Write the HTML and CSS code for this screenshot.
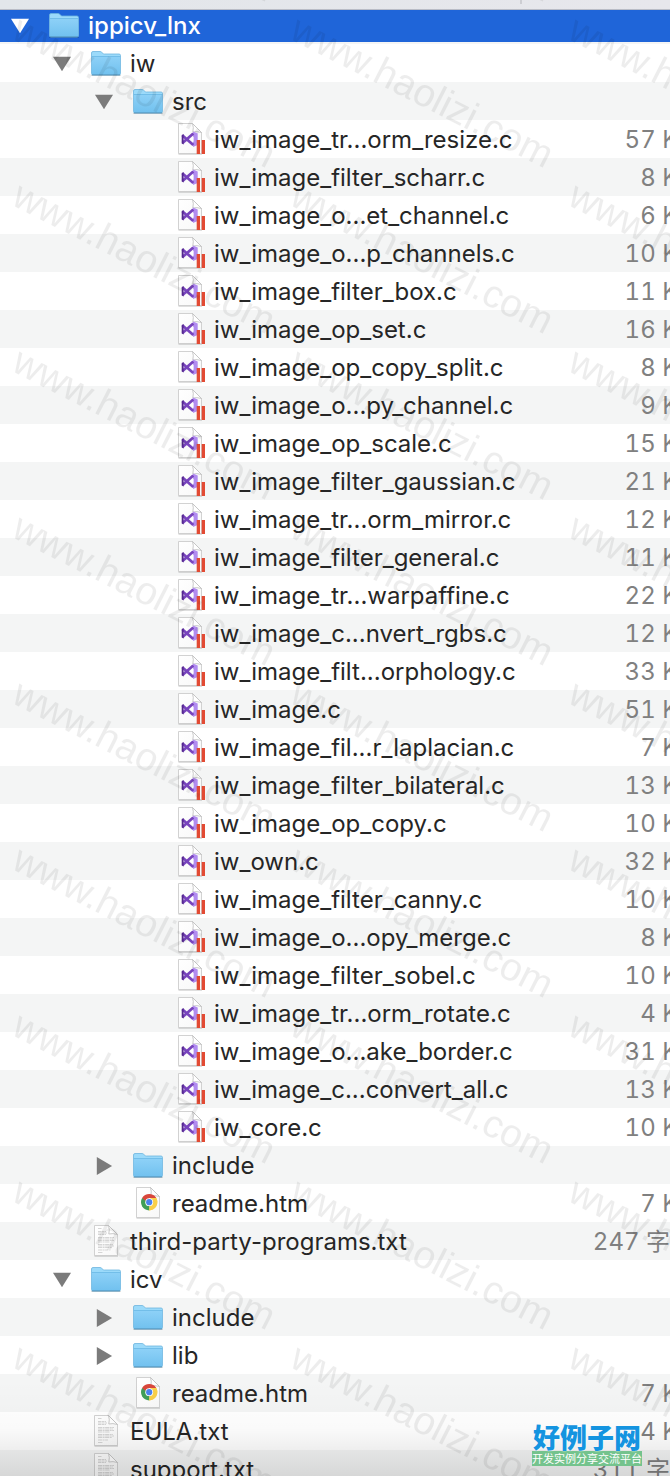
FILE: index.html
```html
<!DOCTYPE html>
<html lang="zh-CN">
<head>
    <meta charset="UTF-8">
    <meta name="viewport" content="width=device-width, initial-scale=1.0">
    <title>ippicv_lnx</title>
    <link rel="stylesheet" href="styles.css">
</head>
<body>
    <!-- Icons -->
    <svg class="sprite" aria-hidden="true">
        <defs>
            <linearGradient id="folderFill" x1="0" y1="0" x2="0" y2="1">
                <stop offset="0" stop-color="#8ed1f7"/>
                <stop offset="1" stop-color="#71c1ef"/>
            </linearGradient>
            <linearGradient id="pageFill" x1="0" y1="0" x2="1" y2="1">
                <stop offset="0" stop-color="#ffffff"/>
                <stop offset="1" stop-color="#f8f8f8"/>
            </linearGradient>
        </defs>
        <symbol id="folder" viewBox="0 0 30 38">
            <path d="M.5 31.500h29" stroke="#000" stroke-opacity=".25"/>
            <path d="M.5 9q0-1.500 1.500-1.500h7q1 0 1.700.8l1.300 1.200q.6.500 1.500.5h14.500q1.500 0 1.500 1.500v18q0 1.500-1.500 1.500H2q-1.500 0-1.500-1.500z" fill="#9bdafa" stroke="#6db5de" stroke-width=".8"/>
            <path d="M.9 12.500h28.200v17q0 1-1.100 1H2q-1.100 0-1.100-1z" fill="url(#folderFill)"/>
            <path d="M.9 12.500h28.200" stroke="#69b7e4" stroke-width=".8"/>
            <path d="M1 30.700h28" stroke="#5a9fc9"/>
        </symbol>
        <symbol id="page" viewBox="0 0 30 38">
            <path d="M3.500 34h23.500" stroke="#000" stroke-opacity=".25"/>
            <path d="M3.500 3.500h14l9 9v21h-23z" fill="url(#pageFill)" stroke="#c6c6c6" stroke-width=".8"/>
            <path d="M17.500 3.500q1.500 4 .3 8.500 4-1 8.700.5z" fill="#fff" stroke="#bdbdbd" stroke-width=".8"/>
        </symbol>
        <symbol id="source" viewBox="0 0 30 38">
            <use href="#page"/>
            <path d="M18 11.500l4.700 2v11.500l-4.700 2z" fill="#b18cf0"/>
            <path d="M7.500 15.500L18.300 25M7.500 23L18.300 13.500" stroke="#7844bd" stroke-width="2.800"/>
            <path d="M6.700 15l1.900-1v10.500l-1.900-1z" fill="#54278f"/>
            <path d="M18.600 16.500v5.500l-3.200-2.700z" fill="#fff"/>
            <rect x="21.700" y="20" width="3.300" height="14" fill="#e24a33"/>
            <rect x="26.700" y="20" width="3.300" height="14" fill="#e24a33"/>
        </symbol>
        <symbol id="chrome" viewBox="0 0 30 38">
            <use href="#page"/>
            <path d="M16.200 18.200L23.300 14.100A8.200 8.200 0 0 1 16.200 26.400z" fill="#f9cf48"/>
            <path d="M16.200 18.200V26.400A8.200 8.200 0 0 1 9.100 14.100z" fill="#3f9e58"/>
            <path d="M16.200 14.100h7.100a8.200 8.200 0 0 1-3.500 11.400l-3.600.9 3.500-6.200z" fill="#f9cf48"/>
            <path d="M9.100 14.100l3.600 6.200 3.500-6.200z" fill="#3f9e58"/>
            <path d="M9.100 14.100A8.200 8.200 0 0 1 23.300 14.100h-7.100l-4 2.600z" fill="#d8463b"/>
            <circle cx="16.200" cy="18.200" r="3.900" fill="#fff"/>
            <circle cx="16.200" cy="18.200" r="3.100" fill="#4a82ee"/>
        </symbol>
        <symbol id="text" viewBox="0 0 30 38">
            <use href="#page"/>
            <g fill="none" stroke="#c4c4c4" stroke-width=".7">
                <path d="M7 6.500h4M7 9.500h8M7 11h9M7 12.500h8" stroke-dasharray="3 .5"/>
                <path d="M7 15.500h16M7 17h15M7 18.500h16M7 20h12M7 22.500h15M7 24h16M7 25.500h14M7 28h10M7 30.500h5" stroke-dasharray="4 .6 2 .5"/>
            </g>
        </symbol>
    </svg>

    <div class="finder">
        <div class="column-header">
            <div class="column-name"></div>
            <div class="column-size"></div>
        </div>
        <table class="files">
            <colgroup>
                <col>
                <col class="size-col">
            </colgroup>
            <tbody id="fileRows"></tbody>
        </table>
    </div>

    <div class="shade"></div>
    <svg class="watermark" aria-hidden="true">
        <defs>
            <pattern id="mark" x="0" y="10" width="278" height="166" patternUnits="userSpaceOnUse">
                <text class="mark-text" transform="translate(10 28) rotate(27)">www.haolizi.com</text>
            </pattern>
        </defs>
        <rect width="100%" height="100%" fill="url(#mark)"/>
    </svg>
    <div class="site-logo">
        <div class="site-name">好例子网</div>
        <div class="site-slogan">开发实例分享交流平台</div>
    </div>

    <script>
        // [depth, icon, name, size, state]
        const files = [
            [0, 'folder', 'ippicv_lnx', '', 'open'],
            [1, 'folder', 'iw', '', 'open'],
            [2, 'folder', 'src', '', 'open'],
            [3, 'source', 'iw_image_tr...orm_resize.c', '57 KB'],
            [3, 'source', 'iw_image_filter_scharr.c', '8 KB'],
            [3, 'source', 'iw_image_o...et_channel.c', '6 KB'],
            [3, 'source', 'iw_image_o...p_channels.c', '10 KB'],
            [3, 'source', 'iw_image_filter_box.c', '11 KB'],
            [3, 'source', 'iw_image_op_set.c', '16 KB'],
            [3, 'source', 'iw_image_op_copy_split.c', '8 KB'],
            [3, 'source', 'iw_image_o...py_channel.c', '9 KB'],
            [3, 'source', 'iw_image_op_scale.c', '15 KB'],
            [3, 'source', 'iw_image_filter_gaussian.c', '21 KB'],
            [3, 'source', 'iw_image_tr...orm_mirror.c', '12 KB'],
            [3, 'source', 'iw_image_filter_general.c', '11 KB'],
            [3, 'source', 'iw_image_tr...warpaffine.c', '22 KB'],
            [3, 'source', 'iw_image_c...nvert_rgbs.c', '12 KB'],
            [3, 'source', 'iw_image_filt...orphology.c', '33 KB'],
            [3, 'source', 'iw_image.c', '51 KB'],
            [3, 'source', 'iw_image_fil...r_laplacian.c', '7 KB'],
            [3, 'source', 'iw_image_filter_bilateral.c', '13 KB'],
            [3, 'source', 'iw_image_op_copy.c', '10 KB'],
            [3, 'source', 'iw_own.c', '32 KB'],
            [3, 'source', 'iw_image_filter_canny.c', '10 KB'],
            [3, 'source', 'iw_image_o...opy_merge.c', '8 KB'],
            [3, 'source', 'iw_image_filter_sobel.c', '10 KB'],
            [3, 'source', 'iw_image_tr...orm_rotate.c', '4 KB'],
            [3, 'source', 'iw_image_o...ake_border.c', '31 KB'],
            [3, 'source', 'iw_image_c...convert_all.c', '13 KB'],
            [3, 'source', 'iw_core.c', '10 KB'],
            [2, 'folder', 'include', '', 'closed'],
            [2, 'chrome', 'readme.htm', '7 KB'],
            [1, 'text', 'third-party-programs.txt', '247 字节'],
            [1, 'folder', 'icv', '', 'open'],
            [2, 'folder', 'include', '', 'closed'],
            [2, 'folder', 'lib', '', 'closed'],
            [2, 'chrome', 'readme.htm', '7 KB'],
            [1, 'text', 'EULA.txt', '4 KB'],
            [1, 'text', 'support.txt', '311 字节']
        ];

        let rows = '';
        files.forEach(([depth, icon, name, size, state], i) => {
            const toggle = state
                ? `<button class="toggle ${state}" aria-label="${name}" aria-expanded="${state === 'open'}"></button>`
                : '<span class="toggle"></span>';
            rows += `<tr class="${i === 0 ? 'selected' : ''}">
                <td><div class="name depth-${depth}">${toggle}<svg class="icon" aria-hidden="true"><use href="#${icon}"/></svg><span>${name}</span></div></td>
                <td class="size">${size}</td>
            </tr>`;
        });
        document.getElementById('fileRows').innerHTML = rows;
    </script>
</body>
</html>
```
FILE: styles.css
```css
body {
    margin: 0;
    height: 100vh;
    position: relative;
    overflow: hidden;
    background-color: #fff;
    color: #262626;
    font-family: Inter, "Noto Sans CJK SC", sans-serif;
    font-size: 24px;
}

.sprite {
    position: absolute;
    width: 0;
    height: 0;
}

.finder {
    overflow: hidden;
}

.column-header {
    display: flex;
    height: 10px;
    box-sizing: border-box;
    background: linear-gradient(90deg, #e2e6ea, #e7e7ec);
    border-bottom: 1px solid #b9bcc6;
}

.column-name {
    flex: 1;
    height: 4px;
    border-right: 2px solid #cdced3;
}

.column-size {
    width: 148px;
}

.files {
    width: calc(100% + 24px);
    table-layout: fixed;
    border-collapse: collapse;
}

.size-col {
    width: 172px;
}

.files td {
    height: 36px;
    padding: 2px 0 0;
    line-height: 36px;
    white-space: nowrap;
}

.files tr:nth-child(odd) {
    background-color: #f4f5f5;
}

.files .selected td {
    height: 32px;
    padding: 0;
    line-height: 32px;
    background-color: #1f65d9;
    border-bottom: 2px solid #f4f5f5;
    color: #fff;
    font-weight: 500;
}

.name {
    display: flex;
    align-items: center;
    height: 36px;
}

.selected .name {
    height: 32px;
}

.depth-0 {
    padding-left: 11px;
}

.depth-1 {
    padding-left: 53px;
}

.depth-2 {
    padding-left: 95px;
}

.depth-3 {
    padding-left: 137px;
}

.toggle {
    width: 18px;
    height: 18px;
    flex: none;
    margin-right: 20px;
    padding: 0;
    border: none;
    background: none;
}

.toggle.open,
.toggle.closed {
    background-color: #7b7b7b;
}

.toggle.open {
    clip-path: polygon(0 10%, 100% 10%, 50% 90%);
}

.toggle.closed {
    clip-path: polygon(10% 0, 95% 50%, 10% 100%);
}

.selected .toggle {
    background-color: #fff;
}

.icon {
    width: 30px;
    height: 38px;
    flex: none;
    margin: 0 9px 2px 0;
}

.files .size {
    text-align: right;
    color: #808080;
    font-variant-numeric: tabular-nums;
}

/* Darker edge at the bottom of the window */
.shade {
    position: absolute;
    left: 0;
    right: 0;
    bottom: 0;
    height: 96px;
    background: linear-gradient(rgba(0, 0, 0, 0), rgba(0, 0, 0, 0.02) 50%, rgba(0, 0, 0, 0.12));
}

.watermark {
    position: absolute;
    top: 0;
    left: 0;
    width: 100%;
    height: 100%;
    pointer-events: none;
}

.mark-text {
    font-family: "Liberation Sans", Arial, sans-serif;
    font-size: 39px;
    fill: #000;
    fill-opacity: 0.07;
}

.site-logo {
    position: absolute;
    right: 28px;
    bottom: 10px;
    text-align: center;
}

.site-name {
    color: #1494e0;
    font-family: "Noto Sans CJK SC", sans-serif;
    font-size: 27px;
    font-weight: 900;
    line-height: 28px;
    text-shadow: 0 0 2px #fff;
}

.site-slogan {
    background-color: #74c38d;
    color: #fff;
    font-family: "Noto Sans CJK SC", sans-serif;
    font-size: 11px;
    line-height: 15px;
}
```
